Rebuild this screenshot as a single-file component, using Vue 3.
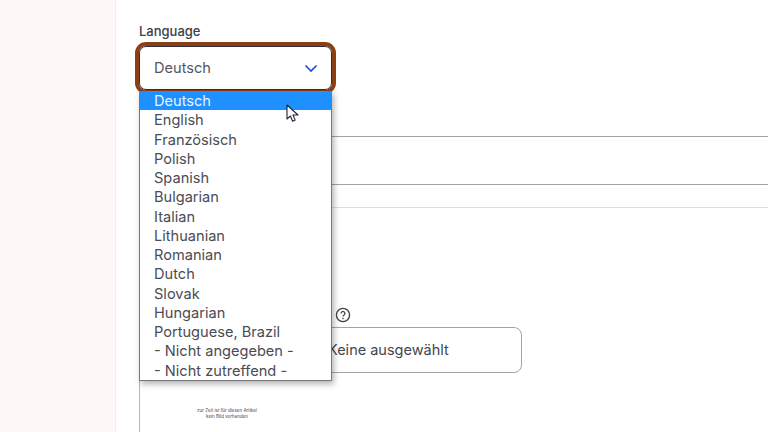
<script setup>
const options = ['English','Französisch','Polish','Spanish','Bulgarian','Italian','Lithuanian','Romanian','Dutch','Slovak','Hungarian','Portuguese, Brazil','- Nicht angegeben -','- Nicht zutreffend -']
</script>

<template>
  <div class="page">
    <aside class="side"></aside>
    <main class="main">
      <div class="label">Language</div>
      <div class="select-wrap">
        <div class="select">
          <span>Deutsch</span>
          <svg class="chev" width="14" height="9" viewBox="0 0 14 9"><path d="M1.5 1.5 7 7l5.5-5.5" fill="none" stroke="#1d4ed8" stroke-width="1.7"/></svg>
        </div>
        <div class="list">
          <div class="opt active">Deutsch</div>
          <div v-for="o in options" :key="o" class="opt">{{ o }}</div>
        </div>
        <svg class="cursor" width="14" height="20" viewBox="0 0 14 20"><path d="M1 1v14l3.4-3 2.2 5.2 2.6-1.1L7 11h5z" fill="#fff" stroke="#1f2433" stroke-width="1.1" stroke-linejoin="round"/></svg>
      </div>
      <div class="field"></div>
      <div class="rule"></div>
      <div class="help-row">
        <svg width="16" height="16" viewBox="0 0 16 16"><circle cx="8" cy="8" r="6.6" fill="none" stroke="#3f3f46" stroke-width="1.3"/><path d="M6.1 6.4a1.9 1.9 0 1 1 2.9 1.6c-.7.4-1 .8-1 1.5" fill="none" stroke="#3f3f46" stroke-width="1.3"/><circle cx="8" cy="11.5" r=".8" fill="#3f3f46"/></svg>
      </div>
      <div class="file"><span>Keine ausgewählt</span></div>
      <div class="thumb">
        <p>zur Zeit ist für diesen Artikel<br>kein Bild vorhanden</p>
      </div>
    </main>
  </div>
</template>

<style scoped>
.page {
  display: flex;
  width: 768px;
  height: 432px;
  overflow: hidden;
  background: #fff;
  font-family: Inter, "Liberation Sans", sans-serif;
  color: #4b4b55;
}
.side {
  width: 116px;
  flex: none;
  background: #fdf8f5;
  border-right: 1px solid #f3efec;
  box-sizing: border-box;
}
.main {
  flex: none;
  width: 800px;
  padding: 23px 0 0 23px;
  box-sizing: border-box;
}
.label {
  font-size: 13px;
  font-weight: 500;
  line-height: 16px;
  color: #3a3d4a;
}
.select-wrap {
  position: relative;
  margin-top: 7px;
  width: 193px;
}
.select {
  display: flex;
  align-items: center;
  justify-content: space-between;
  box-sizing: border-box;
  height: 44px;
  padding: 0 14px;
  font-size: 14.6px;
  color: #555560;
  background: #fff;
  border: 1px solid #2c2f3f;
  border-radius: 7px;
  outline: 4px solid #8c3f13;
  outline-offset: 0;
}
.chev {
  margin-right: -1px;
}
.list {
  position: absolute;
  top: 45px;
  left: 0;
  width: 193px;
  height: 290px;
  overflow: hidden;
  box-sizing: border-box;
  background: #fff;
  border: 1px solid #77777d;
  border-top: 0;
  box-shadow: 2px 3px 6px rgba(0, 0, 0, .3);
  z-index: 2;
}
.opt {
  height: 19.27px;
  line-height: 21.27px;
  padding-left: 14px;
  font-size: 14.6px;
  white-space: nowrap;
}
.active {
  background: #1e90ff;
  color: #e8f4ff;
}
.cursor {
  position: absolute;
  left: 147px;
  top: 58px;
  z-index: 3;
}
.field {
  width: 700px;
  height: 49px;
  margin-top: 46px;
  box-sizing: border-box;
  border-top: 1px solid #a3a3ad;
  border-bottom: 1px solid #a3a3ad;
}
.rule {
  height: 1px;
  margin-top: 22px;
  background: #dedee2;
}
.help-row {
  display: flex;
  justify-content: flex-start;
  padding-left: 196px;
  margin-top: 99px;
  height: 16px;
}
.file {
  display: flex;
  align-items: center;
  width: 383px;
  height: 46px;
  margin-top: 4px;
  box-sizing: border-box;
  padding: 0 0 1px 188px;
  border: 1px solid #a3a3ad;
  border-radius: 8px;
  font-size: 14.5px;
  color: #45454e;
}
.thumb {
  width: 130px;
  height: 100px;
  border-left: 1px solid #b5b5ba;
  box-sizing: border-box;
  padding-top: 35px;
}
.thumb p {
  margin: 0;
  padding-left: 42px;
  font-size: 4.5px;
  line-height: 6px;
  text-align: center;
  width: 90px;
  color: #444;
}
</style>
